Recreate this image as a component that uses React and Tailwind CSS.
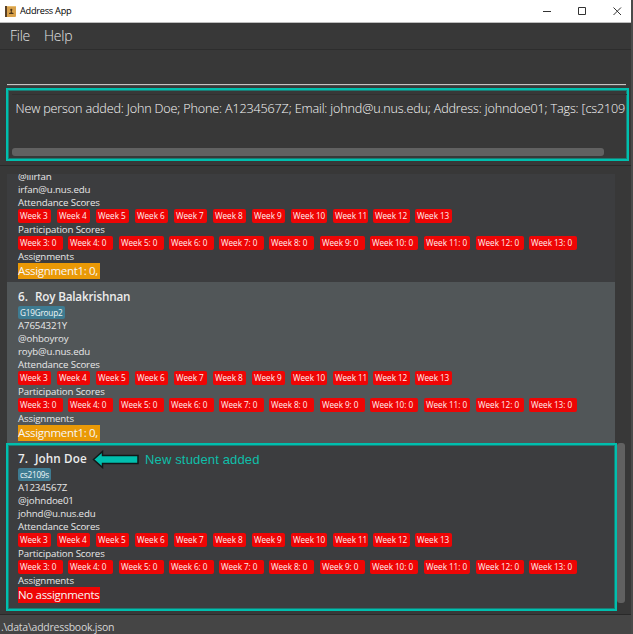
const attendance = [
  { label: 'Week 3', size: 'w-[33px] mr-[6px]' },
  { label: 'Week 4', size: 'w-[33px] mr-[6px]' },
  { label: 'Week 5', size: 'w-[33px] mr-[6px]' },
  { label: 'Week 6', size: 'w-[33px] mr-[6px]' },
  { label: 'Week 7', size: 'w-[33px] mr-[6px]' },
  { label: 'Week 8', size: 'w-[33px] mr-[6px]' },
  { label: 'Week 9', size: 'w-[33px] mr-[6px]' },
  { label: 'Week 10', size: 'w-[36px] mr-[6px]' },
  { label: 'Week 11', size: 'w-[35px] mr-[5px]' },
  { label: 'Week 12', size: 'w-[37px] mr-[5px]' },
  { label: 'Week 13', size: 'w-[37px]' },
];

const participation = [
  { label: 'Week 3: 0', size: 'w-[45px] mr-[5px]' },
  { label: 'Week 4: 0', size: 'w-[45px] mr-[6px]' },
  { label: 'Week 5: 0', size: 'w-[45px] mr-[5px]' },
  { label: 'Week 6: 0', size: 'w-[45px] mr-[5px]' },
  { label: 'Week 7: 0', size: 'w-[45px] mr-[5px]' },
  { label: 'Week 8: 0', size: 'w-[45px] mr-[6px]' },
  { label: 'Week 9: 0', size: 'w-[45px] mr-[5px]' },
  { label: 'Week 10: 0', size: 'w-[48px] mr-[6px]' },
  { label: 'Week 11: 0', size: 'w-[46px] mr-[6px]' },
  { label: 'Week 12: 0', size: 'w-[48px] mr-[5px]' },
  { label: 'Week 13: 0', size: 'w-[48px]' },
];

function Badges({ items }) {
  return (
    <div className="flex h-[14px]">
      {items.map((b) => (
        <span
          key={b.label}
          className={`${b.size} h-[14px] shrink-0 rounded-[2px] bg-[#ee0505] pl-[2px] text-[8.2px] leading-[14px] font-medium tracking-[-0.04px] text-[#fff0f0]`}
        >
          {b.label}
        </span>
      ))}
    </div>
  );
}

function Line({ children }) {
  return <div className="h-[13px] text-[9.7px] leading-[13px] tracking-[-0.14px] text-[#e8e8e8]">{children}</div>;
}

function Scores({ handle, email, assignment, assignmentStyle }) {
  return (
    <>
      <Line>{handle}</Line>
      <Line>{email}</Line>
      <Line>Attendance Scores</Line>
      <Badges items={attendance} />
      <Line>Participation Scores</Line>
      <Badges items={participation} />
      <Line>Assignments</Line>
      <div className={`h-[16px] text-[11.5px] leading-[16px] font-medium tracking-[-0.32px] text-[#f6f6f6] ${assignmentStyle}`}>{assignment}</div>
    </>
  );
}

function Person({ index, name, nameStyle, tag, tagSize, id, bg, ...scores }) {
  return (
    <div className={`h-[162px] shrink-0 pt-[6px] pl-[11px] ${bg}`}>
      <div className="flex h-[18px] text-[11.7px] leading-[17px] font-semibold text-[#ececec]">
        <span className="w-[17px]">{index}.</span>
        <span className={nameStyle}>{name}</span>
      </div>
      <div className={`${tagSize} h-[13px] rounded-[2px] bg-[#3e7b91] pl-[2px] text-[8.2px] leading-[13px] tracking-[-0.2px] text-[#eef6f8]`}>
        {tag}
      </div>
      <Line>{id}</Line>
      <Scores {...scores} />
    </div>
  );
}

export default function App() {
  return (
    <div className="relative flex h-[634px] w-[633px] flex-col overflow-hidden whitespace-nowrap border-r-2 border-[#4a4a4a] bg-[#383838] font-['Open_Sans','Noto_Sans',sans-serif]">
      <header className="-mr-[2px] flex h-[23px] shrink-0 items-center border-b border-[#bdbdbd] bg-white pl-[5px] text-black">
        <svg width="11" height="11" viewBox="0 0 11 11">
          <rect width="11" height="11" rx="1" fill="#d9a24c" />
          <rect width="2" height="11" fill="#594126" />
          <rect x="2" y="0" width="9" height="1" fill="#e8bd72" />
          <circle cx="6.3" cy="3.8" r="1.1" fill="#4c3518" />
          <path d="M5.800 4h1v2.500l1.700.5v.900h-4.400V7l1.700-.5z" fill="#4c3518" />
        </svg>
        <span className="ml-[4px] text-[9.2px] leading-[12px] tracking-[-0.25px]">Address App</span>
        <svg className="ml-auto mr-[11px]" width="80" height="11" viewBox="0 0 80 11" fill="none" stroke="#333" strokeWidth="1">
          <path d="M1 5.500h8M36.500 1.500h7v7h-7zM71.500 1.500l7.500 7.500M79 1.500l-7.500 7.500" />
        </svg>
      </header>

      <nav className="flex h-[27px] shrink-0 border-b border-[#2d2d2d] pl-[10px] text-[14px] leading-[26px] font-light tracking-[-0.25px] text-[#e4e4e4]">
        <span className="w-[34px]">File</span>
        <span>Help</span>
      </nav>

      <div className="h-[38px] shrink-0 px-[7px] pt-[34px]">
        <div className="h-[2px] w-[619px] border-t border-[#c4c4c4] bg-[#4c4c4c]" />
      </div>

      <section className="mr-[2px] ml-[6px] flex h-[73px] shrink-0 flex-col border-2 border-[#00bfae] pl-[4px] shadow-[inset_0_0_0_1px_#1b7c74]">
        <div className="mt-[4px] h-[54px] w-[615px] overflow-hidden border-t border-[#303030] pl-[3.5px] text-[12.6px] leading-[28px] font-light tracking-[-0.155px] text-[#f8f8f8]">
          New person added: John Doe; Phone: A1234567Z; Email: johnd@u.nus.edu; Address: johndoe01; Tags: [cs2109
        </div>
        <div className="h-[8px] w-[592px] rounded-[3px] bg-[#616161]" />
      </section>

      <div className="mt-[4px] h-[9px] shrink-0 border-t border-[#292929]" />

      <main className="flex h-[440px] shrink-0 pl-[7px]">
        <div className="flex h-[436px] w-[608px] flex-col overflow-hidden bg-[#3c3d3f]">
          <div className="flex h-[108px] shrink-0 flex-col justify-end overflow-hidden pb-[3px] pl-[11px]">
            <Scores handle="@iiirfan" email="irfan@u.nus.edu" assignment="Assignment1: 0," assignmentStyle="w-[82px] bg-[#ea9906] shrink-0" />
          </div>
          <Person
            index={6} name="Roy Balakrishnan" nameStyle="tracking-[-0.18px]" tag="G19Group2" tagSize="w-[47px]" id="A7654321Y" handle="@ohboyroy" email="royb@u.nus.edu"
            assignment="Assignment1: 0," assignmentStyle="w-[82px] bg-[#ea9906]" bg="bg-[#515658]"
          />
          <Person
            index={7} name="John Doe" nameStyle="tracking-[0.1px]" tag="cs2109s" tagSize="w-[33px]" id="A1234567Z" handle="@johndoe01" email="johnd@u.nus.edu"
            assignment="No assignments" assignmentStyle="w-[82px] bg-[#ee0505]" bg="bg-[#3c3d3f]"
          />
        </div>
        <div className="ml-[2px] mt-[269px] h-[160px] w-[8px] rounded-[3px] bg-[#616161]" />
      </main>

      <footer className="h-[20px] shrink-0 border-t border-[#292929] bg-[#454545] pl-px text-[10.5px] leading-[24px] tracking-[-0.25px] text-[#d5d5d5]">
        .\data\addressbook.json
      </footer>

      <div className="absolute top-[443px] left-[6px] h-[168px] w-[611px] border-2 border-[#00bfae] shadow-[inset_0_0_0_1px_#1b7c74]" />
      <div className="absolute top-[450px] left-[92px] flex items-center">
        <svg width="48" height="19" viewBox="0 0 48 19">
          <path d="M1.500 9.500 L10.500 1.500 V5.500 H46 V13.500 H10.500 V17.500 Z" fill="#00bfae" stroke="#101818" strokeWidth="1.500" />
        </svg>
        <span className="ml-[5px] font-['Liberation_Sans',sans-serif] text-[13px] leading-[18px] tracking-[0.15px] text-[#0fbfa9]">New student added</span>
      </div>
    </div>
  );
}
